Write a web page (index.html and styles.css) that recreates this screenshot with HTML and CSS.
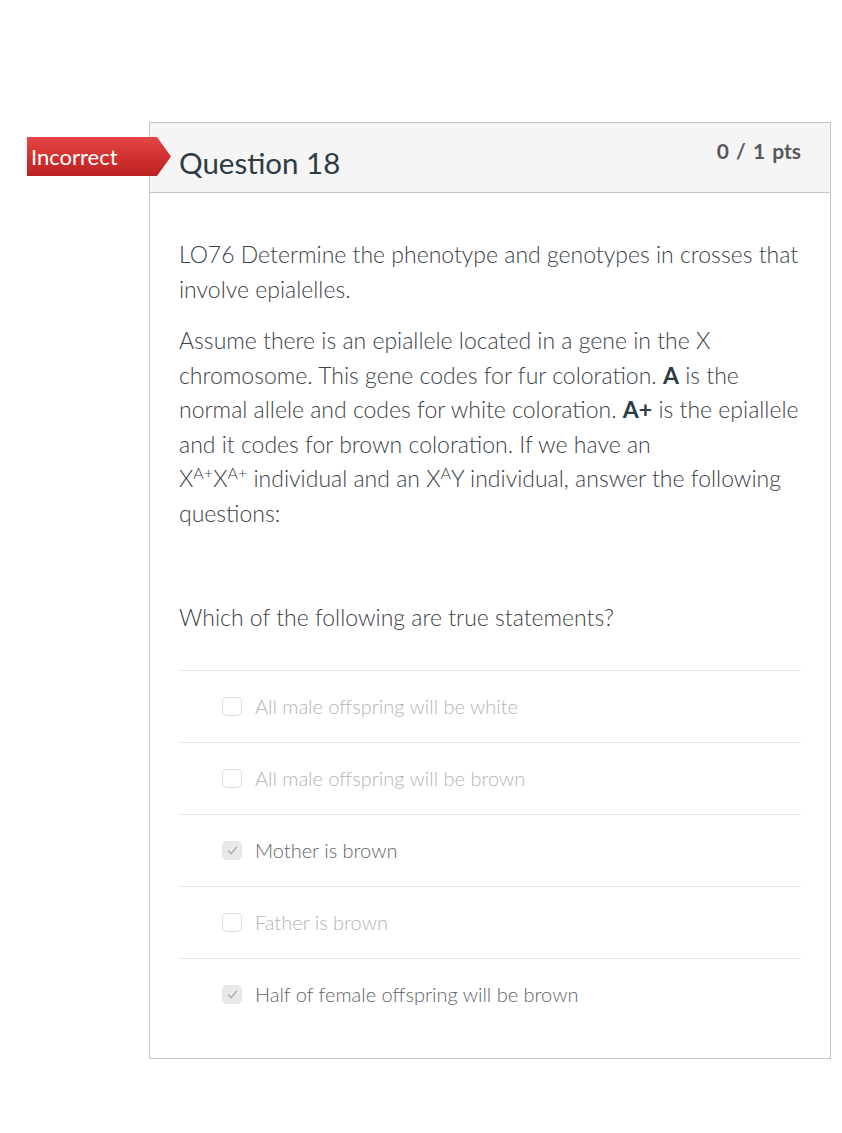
FILE: index.html
```html
<!DOCTYPE html>
<html>
<head>
<meta charset="utf-8">
<link rel="stylesheet" href="styles.css">
</head>
<body>
<div class="page">
  <div class="question">
    <div class="flag">Incorrect</div>
    <div class="q-header">
      <h2 class="q-title">Question 18</h2>
      <div class="q-pts">0 / 1 pts</div>
    </div>
    <div class="q-body">
      <p>LO76 Determine the phenotype and genotypes in crosses that involve epialelles.</p>
      <p>Assume there is an epiallele located in a gene in the X chromosome. This gene codes for fur coloration. <b>A</b> is the normal allele and codes for white coloration. <b>A+</b> is the epiallele and it codes for brown coloration. If we have an<br>X<sup>A+</sup>X<sup>A+</sup> individual and an X<sup>A</sup>Y individual, answer the following questions:</p>
      <p class="prompt">Which of the following are true statements?</p>
      <ul class="answers">
        <li class="answer"><span class="box"></span><span class="label">All male offspring will be white</span></li>
        <li class="answer"><span class="box"></span><span class="label">All male offspring will be brown</span></li>
        <li class="answer selected"><span class="box"><svg viewBox="0 0 20 20" width="15" height="15"><path d="M4.5 10.5 L8.2 14.2 L15.5 5.5" fill="none" stroke="#a0a0a0" stroke-width="1.6" stroke-linecap="round" stroke-linejoin="round"/></svg></span><span class="label">Mother is brown</span></li>
        <li class="answer"><span class="box"></span><span class="label">Father is brown</span></li>
        <li class="answer selected"><span class="box"><svg viewBox="0 0 20 20" width="15" height="15"><path d="M4.5 10.5 L8.2 14.2 L15.5 5.5" fill="none" stroke="#a0a0a0" stroke-width="1.6" stroke-linecap="round" stroke-linejoin="round"/></svg></span><span class="label">Half of female offspring will be brown</span></li>
      </ul>
    </div>
  </div>
</div>
</body>
</html>
```
FILE: styles.css
```css
html, body {
  margin: 0;
  padding: 0;
  background: #ffffff;
}
body {
  font-family: Lato, "Open Sans", "Liberation Sans", sans-serif;
  color: #3b4248;
}
.page {
  padding: 122px 0 0 149px;
}
.question {
  position: relative;
  width: 680px;
  border: 1px solid #c4c7c9;
  background: #fff;
}
.flag {
  position: absolute;
  left: -123px;
  top: 14px;
  width: 144px;
  height: 39px;
  box-sizing: border-box;
  padding-left: 4px;
  line-height: 39px;
  font-size: 22px;
  color: #fff;
  background: linear-gradient(to bottom, #e34745 0%, #d0302f 55%, #b92322 100%);
  clip-path: polygon(0 0, 130px 0, 144px 50%, 130px 100%, 0 100%);
}
.q-header {
  display: flex;
  justify-content: space-between;
  align-items: flex-start;
  height: 70px;
  box-sizing: border-box;
  padding: 0 29px;
  background: #f5f5f5;
  border-bottom: 1px solid #c4c7c9;
}
.q-title {
  margin: 0;
  padding-top: 23px;
  font-size: 29.5px;
  line-height: 34px;
  font-weight: 400;
  color: #2d3b45;
}
.q-pts {
  padding-top: 15px;
  font-size: 21px;
  line-height: 26px;
  font-weight: 700;
  word-spacing: 2px;
  color: #555a5e;
}
.q-body {
  padding: 44px 29px 28px 29px;
  font-size: 23px;
  line-height: 34.5px;
  font-weight: 300;
}
.q-body p {
  margin: 0 0 17px 0;
}
.q-body b {
  font-weight: 700;
  color: #2d3b45;
}
.q-body sup {
  font-size: 16px;
  line-height: 0;
  vertical-align: 8px;
}
.q-body .prompt {
  margin: 70px 0 35px 0;
}
.answers {
  list-style: none;
  margin: 0;
  padding: 0;
}
.answer {
  display: flex;
  align-items: center;
  height: 71px;
  border-top: 1px solid #e4e6e7;
  padding-left: 43px;
  font-size: 20px;
  color: #b3b5b7;
}
.box {
  display: flex;
  align-items: center;
  justify-content: center;
  width: 20px;
  height: 19px;
  box-sizing: border-box;
  border: 1.5px solid #dcdcdc;
  border-radius: 5px;
  margin-right: 13px;
  background: #fff;
}
.answer.selected {
  color: #5f6367;
}
.answer.selected .box {
  border-color: #e6e6e6;
  background: #e9e9e9;
}
```
